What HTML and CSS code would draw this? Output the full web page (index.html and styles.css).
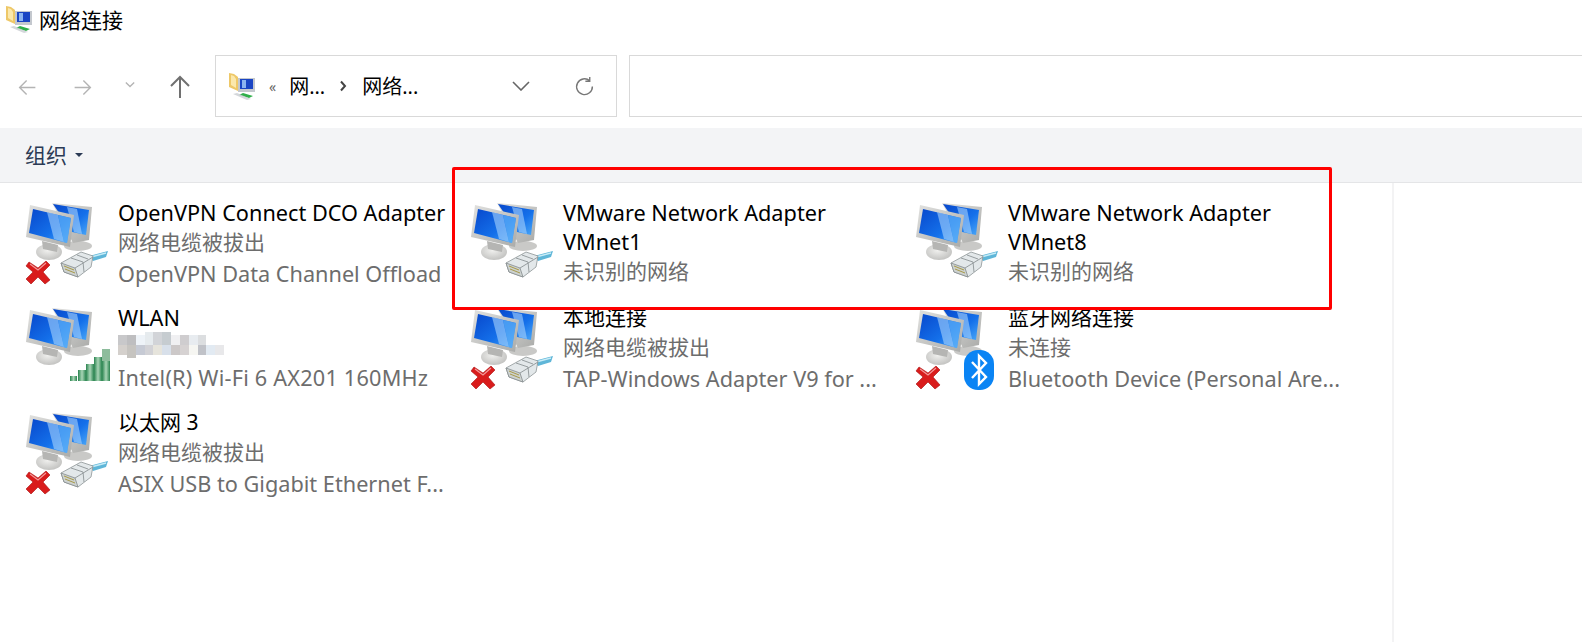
FILE: index.html
```html
<!DOCTYPE html>
<html lang="zh-CN">
<head>
    <meta charset="UTF-8">
    <meta name="viewport" content="width=device-width, initial-scale=1.0">
    <title>网络连接</title>
    <link rel="stylesheet" href="styles.css">
</head>
<body>
    <svg class="defs" width="0" height="0">
        <defs>
            <linearGradient id="screen" x1="0" y1="0" x2="1" y2="1">
                <stop offset="0" stop-color="#0848cc"/>
                <stop offset="0.6" stop-color="#1470ea"/>
                <stop offset="1" stop-color="#4aa8f8"/>
            </linearGradient>
            <linearGradient id="frame" x1="0" y1="0" x2="1" y2="1">
                <stop offset="0" stop-color="#e2e2e0"/>
                <stop offset="1" stop-color="#a9aaa8"/>
            </linearGradient>
            <radialGradient id="foot" cx="0.45" cy="0.4" r="0.7">
                <stop offset="0" stop-color="#f0f0ee"/>
                <stop offset="1" stop-color="#bcbcba"/>
            </radialGradient>
            <linearGradient id="wifibar" x1="0" y1="0" x2="1" y2="0">
                <stop offset="0" stop-color="#2a8450"/>
                <stop offset="0.5" stop-color="#a9d5b6"/>
                <stop offset="1" stop-color="#2a8450"/>
            </linearGradient>

            <symbol id="monitors" viewBox="0 0 90 100">
                <ellipse cx="58" cy="49" rx="14" ry="5" fill="#c9c9c7"/>
                <polygon points="32,6 72,10 69,43 53,46" fill="url(#frame)"/>
                <polygon points="33,7 69,13 66,38 52,35" fill="url(#screen)"/>
                <polygon points="47,10 57,12 62,37 54,35" fill="#a6d2fb" opacity="0.6"/>
                <ellipse cx="29" cy="55" rx="13" ry="8" fill="url(#foot)"/>
                <polygon points="22,44 38,48 37,55 23,52" fill="#b5b5b3"/>
                <polygon points="10,8 54,18 50,50 6,40" fill="url(#frame)"/>
                <polygon points="13,12 51,21 47,46 9,36" fill="url(#screen)"/>
                <polygon points="27,15 38,18 44,45 34,42" fill="#a6d2fb" opacity="0.6"/>
                <polygon points="38,18 51,21 47,46 44,45" fill="#5fb0f8" opacity="0.7"/>
            </symbol>

            <symbol id="plug" viewBox="0 0 50 30">
                <polygon points="29,6 48,1 46,7 33,11" fill="#5fb6d8"/>
                <path d="M31 7 L46 3" stroke="#c8ecf7" stroke-width="1.4" fill="none"/>
                <polygon points="1,13 21,2 33,6 31,17 18,27 4,22" fill="#e3e8ea" stroke="#8d9496" stroke-width="0.8"/>
                <polygon points="1,13 15,18 18,27 4,22" fill="#cdd2d0" stroke="#858c8e" stroke-width="0.8"/>
                <path d="M4 16 L14 20 M5 19 L15 23" stroke="#a89a4a" stroke-width="1"/>
                <path d="M15 18 L33 7 M11 8 L23 12 M17 5 L28 9 M23 12 L24 22" stroke="#8d9496" stroke-width="0.9" fill="none"/>
            </symbol>

            <symbol id="redx" viewBox="0 0 26 26">
                <path d="M4 3 L13 9 L21 2 L25 6 L18 13 L25 21 L20 25 L13 18 L6 25 L1 20 L8 13 L1 7Z" fill="#d91c1c" stroke="#a81010" stroke-width="0.6"/>
                <path d="M5 5 L13 11 L21 4" stroke="#f39a9a" stroke-width="1.2" fill="none"/>
            </symbol>

            <symbol id="wifi" viewBox="0 0 40 34">
                <rect x="0" y="28" width="7" height="5" fill="url(#wifibar)"/>
                <rect x="8" y="22" width="8" height="11" fill="url(#wifibar)"/>
                <rect x="16" y="16" width="8" height="17" fill="url(#wifibar)"/>
                <rect x="24" y="9" width="8" height="24" fill="url(#wifibar)"/>
                <rect x="32" y="1" width="8" height="32" fill="url(#wifibar)"/>
                <rect x="32" y="1" width="8" height="12" fill="#8dbc9c"/>
            </symbol>

            <symbol id="bt" viewBox="0 0 30 40">
                <rect x="0" y="0" width="30" height="40" rx="14" fill="#0a84f4"/>
                <path d="M8 12 L22 27 L15 34 L15 6 L22 13 L8 28" fill="none" stroke="#fff" stroke-width="2.4"/>
            </symbol>

            <symbol id="small-net" viewBox="0 0 26 27">
                <path d="M0 0 L5 1 L9 4 L9 18 L0 14Z" fill="#eec868"/>
                <path d="M2 2 L5 3 L7 6 L7 15 L2 12Z" fill="#fbe8ac"/>
                <rect x="9" y="5" width="17" height="14" fill="#c4c8ce"/>
                <rect x="11" y="6" width="13" height="10" fill="#1a45c4"/>
                <rect x="13" y="7" width="4" height="8" fill="#8cb4f0"/>
                <polygon points="10,22 20,25 24,23 14,20" fill="#2faf4a"/>
                <polygon points="4,21 18,27 22,26 8,20" fill="#c9cdd2" opacity="0.8"/>
            </symbol>
        </defs>
    </svg>

    <div class="titlebar">
        <svg class="title-icon"><use href="#small-net"/></svg>
        <span class="title-text">网络连接</span>
    </div>

    <div class="navbar">
        <div class="nav-buttons">
            <svg class="nav-arrow" viewBox="0 0 24 24"><path d="M21 12H3M11 4l-8 8 8 8" stroke="#b4b4b4"/></svg>
            <svg class="nav-arrow nav-forward" viewBox="0 0 24 24"><path d="M3 12h18M13 4l8 8-8 8" stroke="#b4b4b4"/></svg>
            <svg class="nav-drop" viewBox="0 0 12 8"><path d="M1 1.5l5 5 5-5" stroke="#b4b4b4"/></svg>
            <svg class="nav-arrow nav-up" viewBox="0 0 24 24"><path d="M12 23V2M3 11l9-9 9 9" stroke="#707070"/></svg>
        </div>
        <div class="address">
            <svg class="address-icon"><use href="#small-net"/></svg>
            <span class="crumb-more">«</span>
            <span class="crumb">网...</span>
            <svg class="crumb-sep" viewBox="0 0 8 12"><path d="M2 1.5l4 4.5-4 4.5" stroke="#444"/></svg>
            <span class="crumb">网络...</span>
            <svg class="address-drop" viewBox="0 0 18 10"><path d="M1 1l8 8 8-8" stroke="#666"/></svg>
            <svg class="address-refresh" viewBox="0 0 24 24"><path d="M18 5.5A9 9 0 1 0 21 12M18 1v5h-5" stroke="#777"/></svg>
        </div>
        <div class="search"></div>
    </div>

    <div class="toolbar">
        <span class="toolbar-btn">组织</span>
        <span class="toolbar-caret"></span>
    </div>

    <div class="content">
        <div class="files">
            <div class="item">
                <div class="icon">
                    <svg class="icon-monitors"><use href="#monitors"/></svg>
                    <svg class="icon-x"><use href="#redx"/></svg>
                    <svg class="icon-plug"><use href="#plug"/></svg>
                </div>
                <div class="info">
                    <div class="name">OpenVPN Connect DCO Adapter</div>
                    <div class="sub cjk">网络电缆被拔出</div>
                    <div class="sub">OpenVPN Data Channel Offload</div>
                </div>
            </div>
            <div class="item">
                <div class="icon">
                    <svg class="icon-monitors"><use href="#monitors"/></svg>
                    <svg class="icon-plug"><use href="#plug"/></svg>
                </div>
                <div class="info">
                    <div class="name">VMware Network Adapter</div>
                    <div class="name">VMnet1</div>
                    <div class="sub cjk">未识别的网络</div>
                </div>
            </div>
            <div class="item">
                <div class="icon">
                    <svg class="icon-monitors"><use href="#monitors"/></svg>
                    <svg class="icon-plug"><use href="#plug"/></svg>
                </div>
                <div class="info">
                    <div class="name">VMware Network Adapter</div>
                    <div class="name">VMnet8</div>
                    <div class="sub cjk">未识别的网络</div>
                </div>
            </div>

            <div class="item">
                <div class="icon">
                    <svg class="icon-monitors"><use href="#monitors"/></svg>
                    <svg class="icon-wifi"><use href="#wifi"/></svg>
                </div>
                <div class="info">
                    <div class="name">WLAN</div>
                    <svg class="mosaic" viewBox="0 0 12 3" preserveAspectRatio="none" shape-rendering="crispEdges">
                        <rect x="0" y="0.3" width="1" height="1" fill="#c8c8ca"/>
                        <rect x="1" y="0.3" width="1" height="1" fill="#bebec0"/>
                        <rect x="2" y="0.3" width="1" height="1" fill="#eef3f8"/>
                        <rect x="3" y="0" width="1" height="1.3" fill="#e6ebee"/>
                        <rect x="4" y="0" width="1" height="1.3" fill="#d2d4d8"/>
                        <rect x="5" y="0" width="1" height="1.3" fill="#c6ccd0"/>
                        <rect x="6" y="0.3" width="1" height="1" fill="#f0f0f2"/>
                        <rect x="7" y="0.3" width="1" height="1" fill="#cfcdcf"/>
                        <rect x="8" y="0.3" width="1" height="1" fill="#e8ecf0"/>
                        <rect x="9" y="0.3" width="1" height="1" fill="#dcdee0"/>
                        <rect x="0" y="1.3" width="1" height="1" fill="#d4d0cc"/>
                        <rect x="1" y="1.3" width="1" height="1.3" fill="#c6c4c0"/>
                        <rect x="2" y="1.3" width="1" height="1" fill="#c6cad4"/>
                        <rect x="3" y="1.3" width="1" height="1" fill="#d2d2d6"/>
                        <rect x="4" y="1.3" width="1" height="1" fill="#e6e4dc"/>
                        <rect x="5" y="1.3" width="1" height="1" fill="#d8e0ea"/>
                        <rect x="6" y="1.3" width="1" height="1" fill="#ccc8c8"/>
                        <rect x="7" y="1.3" width="1" height="1" fill="#d6d2d2"/>
                        <rect x="8" y="1.3" width="1" height="1" fill="#f6f6f2"/>
                        <rect x="9" y="1.3" width="1" height="1" fill="#c0c2c8"/>
                        <rect x="10" y="1.3" width="1" height="1" fill="#e2eaf2"/>
                        <rect x="11" y="1.3" width="1" height="1" fill="#e8e8ea"/>
                    </svg>
                    <div class="sub sub-wide">Intel(R) Wi-Fi 6 AX201 160MHz</div>
                </div>
            </div>
            <div class="item">
                <div class="icon">
                    <svg class="icon-monitors"><use href="#monitors"/></svg>
                    <svg class="icon-x"><use href="#redx"/></svg>
                    <svg class="icon-plug"><use href="#plug"/></svg>
                </div>
                <div class="info">
                    <div class="name cjk">本地连接</div>
                    <div class="sub cjk">网络电缆被拔出</div>
                    <div class="sub">TAP-Windows Adapter V9 for ...</div>
                </div>
            </div>
            <div class="item">
                <div class="icon">
                    <svg class="icon-monitors"><use href="#monitors"/></svg>
                    <svg class="icon-x"><use href="#redx"/></svg>
                    <svg class="icon-bt"><use href="#bt"/></svg>
                </div>
                <div class="info">
                    <div class="name cjk">蓝牙网络连接</div>
                    <div class="sub cjk">未连接</div>
                    <div class="sub">Bluetooth Device (Personal Are...</div>
                </div>
            </div>

            <div class="item">
                <div class="icon">
                    <svg class="icon-monitors"><use href="#monitors"/></svg>
                    <svg class="icon-x"><use href="#redx"/></svg>
                    <svg class="icon-plug"><use href="#plug"/></svg>
                </div>
                <div class="info">
                    <div class="name cjk">以太网 3</div>
                    <div class="sub cjk">网络电缆被拔出</div>
                    <div class="sub">ASIX USB to Gigabit Ethernet F...</div>
                </div>
            </div>
        </div>
        <div class="preview"></div>
    </div>

    <div class="highlight"></div>
</body>
</html>
```

FILE: styles.css
```css
body {
    font-family: "Noto Sans", "Noto Sans CJK SC", sans-serif;
    margin: 0;
    width: 1582px;
    height: 642px;
    overflow: hidden;
    background-color: white;
    color: black;
}
.defs {
    display: block;
}
.titlebar {
    display: flex;
    align-items: center;
    height: 38px;
    padding-left: 6px;
    margin-bottom: 17px;
}
.title-icon {
    width: 26px;
    height: 27px;
    margin-right: 7px;
}
.title-text {
    font-size: 21px;
}
.navbar {
    display: flex;
    height: 62px;
    margin-bottom: 11px;
}
.nav-buttons {
    display: flex;
    align-items: center;
    width: 215px;
    padding-left: 17px;
    box-sizing: border-box;
}
.nav-buttons path, .address path {
    fill: none;
    stroke-width: 1.6;
}
.nav-buttons .nav-up path, .crumb-sep path {
    stroke-width: 2;
}
.nav-arrow {
    width: 21px;
    height: 21px;
    margin-right: 34px;
    margin-top: 2px;
}
.nav-forward {
    margin-right: 32px;
}
.nav-drop {
    width: 10px;
    height: 7px;
    margin-right: 33px;
    margin-top: -4px;
}
.nav-up {
    width: 24px;
    height: 24px;
    margin: 2px 0 0 0;
}
.address {
    display: flex;
    align-items: center;
    width: 402px;
    box-sizing: border-box;
    border: 1px solid #d9d9d9;
    padding-left: 13px;
}
.address-icon {
    width: 26px;
    height: 27px;
}
.crumb-more {
    margin: 0 13px 0 14px;
    font-size: 14px;
    color: #666;
}
.crumb {
    font-size: 20px;
    margin-bottom: 2px;
}
.crumb-sep {
    width: 8px;
    height: 12px;
    margin: 0 15px 0 14px;
}
.address-drop {
    width: 18px;
    height: 10px;
    margin-left: auto;
}
.address-refresh {
    width: 21px;
    height: 21px;
    margin: 0 21px 0 44px;
}
.search {
    flex: 1;
    margin-left: 12px;
    border: 1px solid #d9d9d9;
    border-right: none;
}
.toolbar {
    display: flex;
    align-items: center;
    height: 54px;
    padding-left: 25px;
    background-color: #f3f4f6;
    border-bottom: 1px solid #e4e5e7;
}
.toolbar-btn {
    font-size: 21px;
    color: #2b3a55;
    margin-bottom: 3px;
}
.toolbar-caret {
    margin-left: 8px;
    border-left: 4px solid transparent;
    border-right: 4px solid transparent;
    border-top: 4px solid #2b3a55;
}
.content {
    display: flex;
    height: 459px;
}
.files {
    display: grid;
    grid-template-columns: repeat(3, 445px);
    grid-auto-rows: 105px;
    width: 1394px;
    padding: 15px 0 0 20px;
    box-sizing: border-box;
    border-right: 2px solid #f3f3f4;
}
.item {
    display: flex;
}
.icon {
    position: relative;
    flex: none;
    width: 98px;
    height: 100px;
}
.icon svg {
    position: absolute;
}
.icon-monitors {
    left: 0;
    top: -1px;
    width: 90px;
    height: 100px;
}
.icon-x {
    left: 5px;
    top: 61px;
    width: 26px;
    height: 26px;
}
.icon-plug {
    left: 40px;
    top: 52px;
    width: 50px;
    height: 30px;
}
.icon-wifi {
    left: 50px;
    top: 45px;
    width: 40px;
    height: 34px;
}
.icon-bt {
    left: 54px;
    top: 47px;
    width: 30px;
    height: 40px;
}
.info {
    min-width: 0;
    white-space: nowrap;
}
.name {
    height: 29px;
    line-height: 29px;
    font-size: 21.7px;
}
.sub {
    height: 30.5px;
    line-height: 31px;
    font-size: 21.7px;
    color: #6d6d6d;
}
.name.cjk, .sub.cjk {
    font-size: 21px;
}
.sub-wide {
    letter-spacing: 0.2px;
}
.mosaic {
    display: block;
    width: 106px;
    height: 30px;
}
.highlight {
    position: absolute;
    left: 452px;
    top: 167px;
    width: 874px;
    height: 137px;
    border: 3px solid #ff0000;
    border-radius: 2px;
}
```
